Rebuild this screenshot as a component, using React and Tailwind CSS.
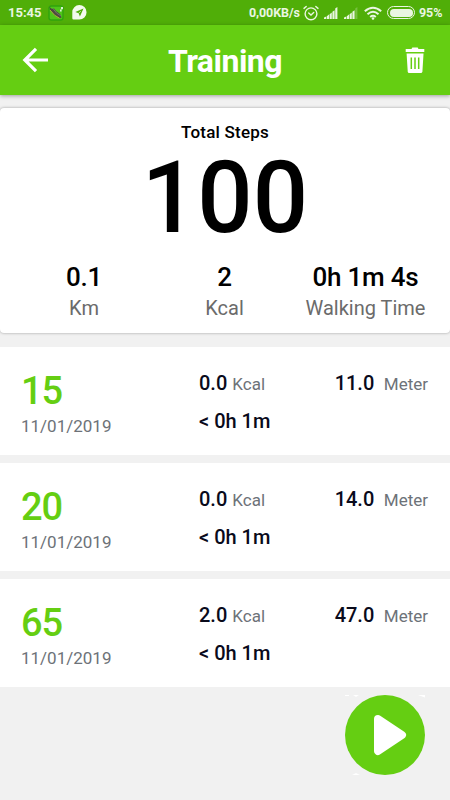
const sessions = [
  { steps: '15', date: '11/01/2019', kcal: '0.0', time: '< 0h 1m', meters: '11.0' },
  { steps: '20', date: '11/01/2019', kcal: '0.0', time: '< 0h 1m', meters: '14.0' },
  { steps: '65', date: '11/01/2019', kcal: '2.0', time: '< 0h 1m', meters: '47.0' },
];

function ShoeIcon() {
  return (
    <svg className="ml-[6px] h-4 w-4 shrink-0" viewBox="0 0 16 16">
      <rect x=".3" y=".3" width="15.4" height="15.4" rx="3" fill="#2fa30d" />
      <rect x="1.7" y="1.7" width="12.6" height="12.6" rx="1.5" fill="#4fc51a" />
      <path d="M1.5 2 4 4l2-.6L8 6l4 3 1.6 3.6-2 .6-5-3L2 5z" fill="#4c4a40" />
      <path d="M5 3.5 8.5 8l4.5 3" stroke="#77736a" strokeWidth="1" fill="none" />
      <path d="m2 5 4.6 5.2 5 3" stroke="#c3bc35" strokeWidth=".8" fill="none" />
      <path d="M13 2h2v2.2h-2zM12 4.6h1.6v2H12z" fill="#d9f2d3" />
    </svg>
  );
}

function NavigationIcon() {
  return (
    <svg className="ml-[8px] h-[15px] w-[15px] shrink-0" viewBox="0 0 15 15">
      <path d="M7.3 0a7.2 7.2 0 1 1 0 14.5H1.5Q.3 14.5.3 13.3V7.2A7.1 7.1 0 0 1 7.3 0z" fill="#f3faee" />
      <path d="m11.5 3.5-8.2 3.6 3.4 1.1 1.2 3.4z" fill="#4fae08" />
      <path d="m6.7 8.2 2-2" stroke="#f3faee" strokeWidth=".7" />
    </svg>
  );
}

function AlarmIcon() {
  return (
    <svg className="h-4 w-4 shrink-0" viewBox="0 0 16 16" fill="none" stroke="#eaf6e2" strokeWidth="1.4" strokeLinecap="round">
      <circle cx="8" cy="8.8" r="5.9" />
      <path d="M1 3.4 3.2 1.5M15 3.4l-2.2-1.9M5.7 8 8 10.1l2.7-2.5" />
    </svg>
  );
}

function SignalIcon({ weak }) {
  return (
    <svg className="h-3 w-[14px] shrink-0" viewBox="0 0 14 12" fill="#eaf6e2">
      <path d="M0 12v-1.4l2.2-1V12zM2.8 12V9.2L5 7.6V12zM5.6 12V7.2l2.2-1.6V12zM8.4 12V4.8l2.2-1.6V12z" />
      <path d="M11.2 12V1.6L13.4 0v12z" fillOpacity={weak ? 0.25 : 1} />
    </svg>
  );
}

function WifiIcon() {
  return (
    <svg className="h-[14px] w-[18px] shrink-0" viewBox="0 0 18 14" fill="none" stroke="#eaf6e2" strokeWidth="2">
      <path d="M.8 5.3Q9-1.7 17.2 5.3M3.5 8.2Q9 3.4 14.5 8.2M6.2 10.9Q9 8.5 11.8 10.9" />
      <circle cx="9" cy="12.5" r="1.3" fill="#eaf6e2" stroke="none" />
    </svg>
  );
}

function StatusBar() {
  return (
    <div className="flex h-[25px] items-center bg-[#50ae08] pl-2 text-[13px] font-bold text-[#eaf6e2]">
      <span className="w-[34px] whitespace-nowrap pt-px">15:45</span>
      <ShoeIcon />
      <NavigationIcon />
      <span className="ml-[162px] w-[52px] whitespace-nowrap pt-px text-[12.5px] tracking-[-0.1px]">0,00KB/s</span>
      <div className="ml-[2px] flex items-center">
        <AlarmIcon />
        <div className="ml-[5px] flex gap-[6px]">
          <SignalIcon />
          <SignalIcon weak />
        </div>
        <div className="ml-[6px]"><WifiIcon /></div>
        <div className="ml-[5px] h-[13px] w-[28px] rounded-full border border-[#eaf6e2] p-[1.5px]">
          <div className="h-full rounded-full bg-[#eaf6e2]" />
        </div>
        <span className="ml-[4px] pt-px text-[12.5px] tracking-[-0.1px]">95%</span>
      </div>
    </div>
  );
}

function Header() {
  return (
    <header className="relative flex h-[70px] items-center justify-between bg-[#65ce12] pl-[22px] pr-[25px] text-white shadow-[0_1px_4px_rgba(0,0,0,0.35)]">
      <svg className="h-[26px] w-[27px]" viewBox="0 0 27 26" fill="none" stroke="currentColor" strokeWidth="3.2">
        <path d="M26 13H3.5M14 1.8 2.8 13 14 24.2" />
      </svg>
      <h1 className="pr-[4px] pt-[2px] text-[32px] font-bold leading-[38px] tracking-[-0.5px]">Training</h1>
      <svg className="h-[26px] w-[20px]" viewBox="0 0 20 26">
        <path d="M.7 2H6.5l.8-1.5h5.4l.8 1.5h5.8v3H.7z" fill="#fff" />
        <path d="M1.6 6.5h16.9l-1.1 18q-.1 1.5-1.6 1.5H4.3q-1.5 0-1.6-1.5z" fill="#fff" />
        <path d="M6.3 10.5v11.6M10 10.5v11.6M13.7 10.5v11.6" stroke="#65ce12" strokeWidth="1.5" />
      </svg>
    </header>
  );
}

function Stat({ value, label }) {
  return (
    <div className="flex flex-col items-center whitespace-nowrap">
      <div className="text-[26px] font-medium leading-[30px] tracking-[-0.2px]">{value}</div>
      <div className="mt-[4px] text-[20px] leading-[24px] text-[#6b6b6b]">{label}</div>
    </div>
  );
}

function Summary() {
  return (
    <section className="mt-[13px] h-[225px] rounded bg-white text-center text-black shadow-[0_0_3px_rgba(0,0,0,0.35)]">
      <div className="pt-[14px] text-[17px] font-medium leading-[20px] tracking-[0.2px]">Total Steps</div>
      <div className="h-[120px] scale-x-[0.975] text-[100px] font-medium leading-[112px]">100</div>
      <div className="grid grid-cols-[168px_113px_169px]">
        <Stat value="0.1" label="Km" />
        <Stat value="2" label="Kcal" />
        <Stat value="0h 1m 4s" label="Walking Time" />
      </div>
    </section>
  );
}

function SessionRow({ steps, date, kcal, time, meters }) {
  return (
    <li className="flex h-[108px] whitespace-nowrap bg-white pl-[21px] pr-[22px] text-[#090a1b]">
      <div className="w-[178px] pt-[22px]">
        <div className="text-[38px] font-medium leading-[44px] tracking-[-1px] text-[#65ce12]">{steps}</div>
        <div className="mt-[3px] text-[17px] leading-[20px] text-[#6d7278]">{date}</div>
      </div>
      <div className="flex-1 pt-[24px]">
        <div className="flex items-baseline gap-[5px]">
          <span className="text-[20px] font-medium leading-[24px]">{kcal}</span>
          <span className="text-[17px] text-[#6d7278]">Kcal</span>
        </div>
        <div className="mt-[11px] text-[20px] font-medium leading-[24px]">{time}</div>
      </div>
      <div className="flex items-baseline gap-[9.5px] pt-[24px]">
        <span className="text-[20px] font-medium leading-[24px]">{meters}</span>
        <span className="text-[17px] text-[#6d7278]">Meter</span>
      </div>
    </li>
  );
}

export default function App() {
  return (
    <main className="relative h-[800px] w-[450px] overflow-hidden bg-[#f1f1f1] font-['Roboto',sans-serif]">
      <StatusBar />
      <Header />
      <Summary />
      <ul className="mt-[14px] flex flex-col gap-[8.2px]">
        {sessions.map((s) => <SessionRow key={s.steps} {...s} />)}
      </ul>
      <button aria-label="Start" className="absolute right-[25px] top-[695px] h-20 w-20">
        <svg viewBox="0 0 80 80" className="block h-20 w-20">
          <path d="M0 0h4v1H0zM8 0h6l-3 2zM73 0h7v2.5zM7 80l4-2 4 2z" fill="#fff" />
          <circle cx="40" cy="40" r="40" fill="#65ce12" />
          <path d="M33 24 57 40 33 56z" fill="#fff" stroke="#fff" strokeWidth="8" strokeLinejoin="round" />
        </svg>
      </button>
    </main>
  );
}
